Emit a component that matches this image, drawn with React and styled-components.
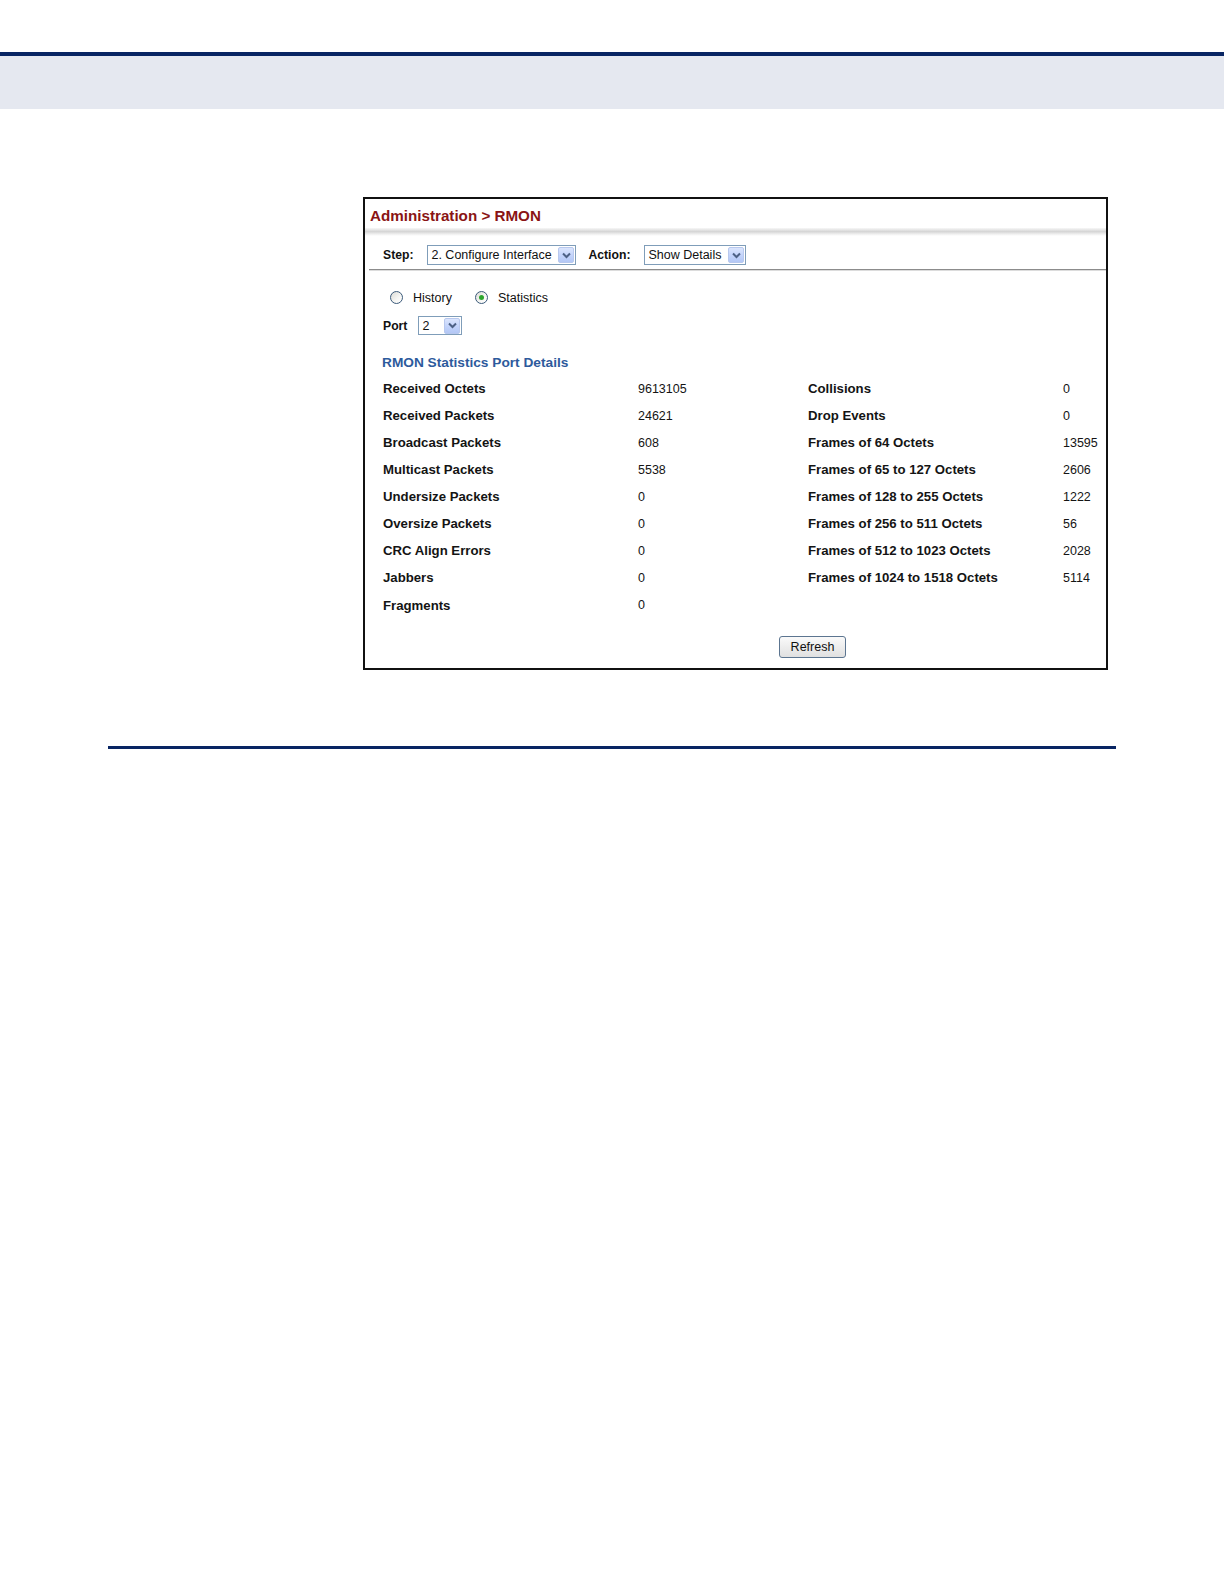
import React from "react"
import styled, { createGlobalStyle } from "styled-components"

const GlobalStyle = createGlobalStyle`
  body {
    margin: 0;
    background: #ffffff;
    font-family: "Liberation Sans", Arial, sans-serif;
    color: #111111;
  }
`

const Page = styled.div`
  width: 1224px;
  min-height: 1584px;
  background: #ffffff;
`

const TopSpace = styled.div`
  height: 52px;
`

const NavyRule = styled.div`
  height: 4px;
  background: #082563;
`

const Band = styled.div`
  height: 53px;
  background: #e5e8f0;
`

const Main = styled.main`
  padding: 88px 0 0 363px;
`

const Panel = styled.section`
  box-sizing: border-box;
  width: 745px;
  height: 473px;
  border: 2px solid #111111;
  display: flex;
  flex-direction: column;
`

const Title = styled.h1`
  margin: 0;
  padding: 5px 4px 0 5px;
  height: 24px;
  line-height: 24px;
  font-size: 15.2px;
  font-weight: bold;
  color: #8a1414;
`

const Shade = styled.div`
  height: 8px;
  background: linear-gradient(to bottom, #f7f7f7 0%, #d5d5d5 45%, #eeeeee 75%, #ffffff 100%);
`

const Toolbar = styled.div`
  display: flex;
  align-items: center;
  padding: 9px 0 4px 18px;
`

const Label = styled.span`
  font-size: 12.2px;
  font-weight: bold;
  margin-right: ${p => p.$gap || 0}px;
`

const Divider = styled.div`
  margin-left: 4px;
  height: 1px;
  background: #8c8c8c;
  border-bottom: 1px solid #dcdcdc;
`

const Body = styled.div`
  padding-left: 18px;
  display: flex;
  flex-direction: column;
`

const SelectBox = styled.span`
  box-sizing: border-box;
  display: inline-flex;
  align-items: center;
  justify-content: space-between;
  width: ${p => p.$width}px;
  height: ${p => p.$height || 20}px;
  margin-right: ${p => p.$gap || 0}px;
  padding: 0 1px 0 3px;
  border: 1px solid #7f9db9;
  background: #ffffff;
  font-size: 12.5px;
  color: #111111;
  white-space: nowrap;
`

const ArrowBtn = styled.span`
  box-sizing: border-box;
  display: inline-flex;
  align-items: center;
  justify-content: center;
  width: 16px;
  height: 16px;
  border: 1px solid #b8c8ee;
  border-radius: 2px;
  background: linear-gradient(to bottom, #dbe5fd 0%, #c2d3fb 55%, #b3c7f5 100%);
`

const Select = ({ value, width, height, gap }) => (
  <SelectBox $width={width} $height={height} $gap={gap}>
    <span>{value}</span>
    <ArrowBtn>
      <svg width="9" height="7" viewBox="0 0 9 7">
        <path d="M1 1.5 L4.5 5 L8 1.5" fill="none" stroke="#4d6185" strokeWidth="2" />
      </svg>
    </ArrowBtn>
  </SelectBox>
)

const RadioRow = styled.div`
  display: flex;
  align-items: center;
  height: 17px;
  margin-top: 18px;
`

const RadioCircle = styled.span`
  box-sizing: border-box;
  display: inline-flex;
  align-items: center;
  justify-content: center;
  width: 13px;
  height: 13px;
  margin-left: ${p => p.$offset}px;
  border: 1px solid #3b5a7a;
  border-radius: 50%;
  background: linear-gradient(135deg, #dcdcd6 0%, #f6f6f4 60%, #ffffff 100%);
`

const Dot = styled.span`
  width: 5px;
  height: 5px;
  border-radius: 50%;
  background: #2ca52c;
`

const RadioText = styled.span`
  margin-left: 10px;
  font-size: 12.5px;
`

const PortRow = styled.div`
  display: flex;
  align-items: center;
  height: 19px;
  margin-top: 10px;
`

const Heading = styled.h2`
  margin: 19px 0 0 -1px;
  line-height: 18px;
  font-size: 13.7px;
  font-weight: bold;
  color: #2d5a9c;
`

const StatGrid = styled.div`
  display: grid;
  grid-template-columns: 255px 170px 255px 1fr;
  grid-auto-rows: 27.07px;
  align-items: center;
  margin-top: 3px;
`

const StatName = styled.span`
  font-size: 13.2px;
  font-weight: bold;
  color: #141414;
`

const StatValue = styled.span`
  font-size: 12.5px;
  color: #141414;
`

const ButtonRow = styled.div`
  margin: 17px 0 0 396px;
`

const Button = styled.button`
  box-sizing: border-box;
  width: 67px;
  height: 22px;
  padding: 0;
  border: 1px solid #5c7590;
  border-radius: 3px;
  background: linear-gradient(to bottom, #fafafa 0%, #ededed 50%, #e0e0e0 100%);
  font-family: "Liberation Sans", Arial, sans-serif;
  font-size: 12.5px;
  color: #111111;
`

const BottomRule = styled.div`
  margin: 76px 0 0 108px;
  width: 1008px;
  height: 3px;
  background: #082563;
`

const left = [
  ["Received Octets", "9613105"],
  ["Received Packets", "24621"],
  ["Broadcast Packets", "608"],
  ["Multicast Packets", "5538"],
  ["Undersize Packets", "0"],
  ["Oversize Packets", "0"],
  ["CRC Align Errors", "0"],
  ["Jabbers", "0"],
  ["Fragments", "0"],
]

const right = [
  ["Collisions", "0"],
  ["Drop Events", "0"],
  ["Frames of 64 Octets", "13595"],
  ["Frames of 65 to 127 Octets", "2606"],
  ["Frames of 128 to 255 Octets", "1222"],
  ["Frames of 256 to 511 Octets", "56"],
  ["Frames of 512 to 1023 Octets", "2028"],
  ["Frames of 1024 to 1518 Octets", "5114"],
]

const App = () => (
  <Page>
    <GlobalStyle />
    <TopSpace />
    <NavyRule />
    <Band />
    <Main>
      <Panel>
        <Title>Administration &gt; RMON</Title>
        <Shade />
        <Toolbar>
          <Label $gap={14}>Step:</Label>
          <Select value="2. Configure Interface" width={149} gap={12} />
          <Label $gap={14}>Action:</Label>
          <Select value="Show Details" width={102} />
        </Toolbar>
        <Divider />
        <Body>
          <RadioRow>
            <RadioCircle $offset={7} />
            <RadioText>History</RadioText>
            <RadioCircle $offset={23}>
              <Dot />
            </RadioCircle>
            <RadioText>Statistics</RadioText>
          </RadioRow>
          <PortRow>
            <Label $gap={11}>Port</Label>
            <Select value="2" width={44} height={19} />
          </PortRow>
          <Heading>RMON Statistics Port Details</Heading>
          <StatGrid>
            {left.map(([name, value], i) => (
              <React.Fragment key={name}>
                <StatName>{name}</StatName>
                <StatValue>{value}</StatValue>
                <StatName>{right[i] ? right[i][0] : ""}</StatName>
                <StatValue>{right[i] ? right[i][1] : ""}</StatValue>
              </React.Fragment>
            ))}
          </StatGrid>
          <ButtonRow>
            <Button>Refresh</Button>
          </ButtonRow>
        </Body>
      </Panel>
    </Main>
    <BottomRule />
  </Page>
)

export default App
